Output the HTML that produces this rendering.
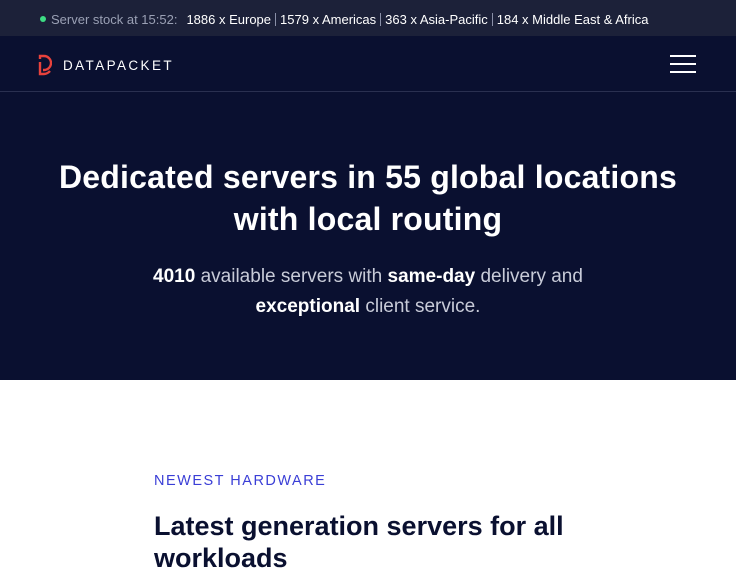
<!DOCTYPE html>
<html><head><style>
*{margin:0;padding:0;box-sizing:border-box}
body{width:750px;height:563px;overflow:hidden;background:#fff;font-family:"Liberation Sans",sans-serif;position:relative}
.wrap{width:736px;position:absolute;left:0;top:0}
.top{height:36px;background:#1c2139;color:#fff;font-size:13px;display:flex;align-items:center;padding-left:40px;padding-top:2px;white-space:nowrap}
.dot{width:6px;height:6px;border-radius:50%;background:#3ddc84;margin-right:5px}
.muted{color:#9aa0b4;margin-right:9px}
.sep{display:inline-block;width:1px;height:13px;background:#8a90a8;margin:0 4px}
.nav{height:56px;background:#0a1030;border-bottom:1px solid #2a3050;position:relative}
.logo{position:absolute;left:38px;top:18px;display:flex;align-items:center}
.logo span{color:#fff;font-size:13.5px;letter-spacing:2.4px;margin-left:11px}
.burger{position:absolute;left:670px;top:19px}
.burger i{display:block;width:26px;height:2px;background:#fff;margin-bottom:6px}
.hero{height:288px;background:#0a1030;text-align:center;color:#fff}
h1{font-size:32px;font-weight:bold;line-height:42px;padding-top:64px;letter-spacing:0.2px}
.sub{font-size:19px;line-height:30px;color:#c8cbd8;margin-top:22px}
.sub b{color:#fff}
.sec{padding-left:154px}
.kick{color:#3a3ed6;font-size:14.5px;letter-spacing:1.5px;margin-top:93px}
h2{font-size:27px;color:#0a1030;font-weight:bold;line-height:32px;margin-top:21px;width:440px}
</style></head><body><div class="wrap">
<div class="top"><div class="dot"></div><span class="muted">Server stock at 15:52:</span>1886 x Europe<span class="sep"></span>1579 x Americas<span class="sep"></span>363 x Asia-Pacific<span class="sep"></span>184 x Middle East &amp; Africa</div>
<div class="nav"><div class="logo"><svg width="14" height="22" viewBox="0 0 14 22"><path d="M2 5V2h4a7 7 0 0 1 0 14H5" fill="none" stroke="#e8423c" stroke-width="2.4"/><path d="M2 8v12h4a9 9 0 0 0 6-3" fill="none" stroke="#e8423c" stroke-width="2.4"/></svg><span>DATAPACKET</span></div>
<div class="burger"><i></i><i></i><i></i></div></div>
<div class="hero"><h1>Dedicated servers in 55 global locations<br>with local routing</h1>
<p class="sub"><b>4010</b> available servers with <b>same-day</b> delivery and<br><b>exceptional</b> client service.</p></div>
<div class="sec"><p class="kick">NEWEST HARDWARE</p><h2>Latest generation servers for all workloads</h2></div>
</div></body></html>
